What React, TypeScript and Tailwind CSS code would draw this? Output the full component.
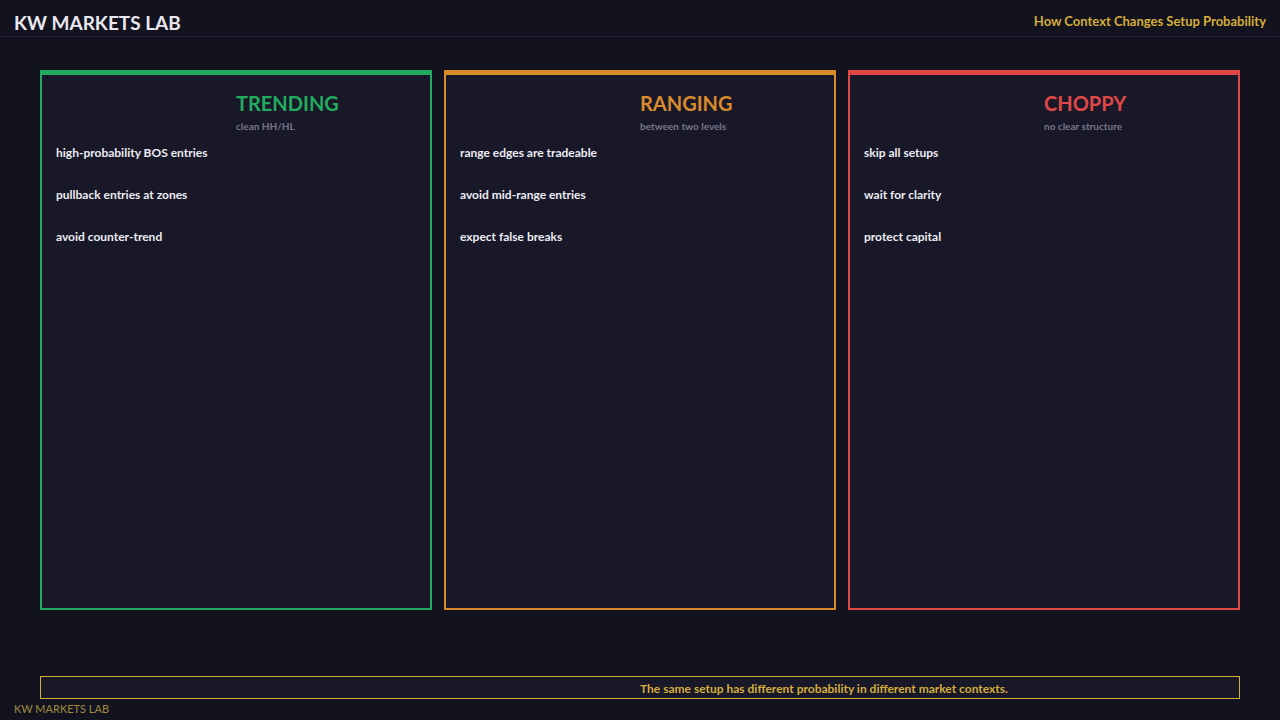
export default function App() {
  const cards = [
    { t: "TRENDING", s: "clean HH/HL", c: "text-[#22ab5f]", b: "border-[#22ab5f]", items: ["high-probability BOS entries", "pullback entries at zones", "avoid counter-trend"] },
    { t: "RANGING", s: "between two levels", c: "text-[#d98a2b]", b: "border-[#d98a2b]", items: ["range edges are tradeable", "avoid mid-range entries", "expect false breaks"] },
    { t: "CHOPPY", s: "no clear structure", c: "text-[#e04848]", b: "border-[#e04848]", items: ["skip all setups", "wait for clarity", "protect capital"] },
  ];
  return (
    <div className="w-[1280px] h-[720px] bg-[#13131f] flex flex-col overflow-hidden" style={{ fontFamily: "Lato, 'Open Sans', sans-serif" }}>
      <div className="h-[37px] border-b border-[#23233a] flex items-center justify-between px-[14px]">
        <span className="text-[19px] font-bold text-[#e8e8ee] mt-[9px] leading-none">KW MARKETS LAB</span>
        <span className="text-[13px] font-bold text-[#d4ad3a] mt-[7px]">How Context Changes Setup Probability</span>
      </div>
      <div className="flex gap-[12px] px-[40px] mt-[33px] h-[540px]">
        {cards.map((k) => (
          <div key={k.t} className={`flex-1 bg-[#181828] border-2 border-t-[5px] ${k.b} flex flex-col`}>
            <div className="pl-[194px] pt-[14px]">
              <div className={`text-[20px] font-bold leading-[28px] ${k.c}`}>{k.t}</div>
              <div className="text-[10px] font-bold text-[#77778a] leading-[14px] mt-[2px]">{k.s}</div>
            </div>
            <div className="pl-[14px] pt-[12px] flex flex-col gap-[26px]">
              {k.items.map((i) => (
                <div key={i} className="text-[12px] font-bold text-[#ececf2] leading-[16px]">{i}</div>
              ))}
            </div>
          </div>
        ))}
      </div>
      <div className="mx-[40px] mt-[66px] h-[23px] border border-[#d4ad3a] bg-[#181828] pl-[599px] flex items-end">
        <span className="text-[12px] font-bold text-[#d4ad3a] leading-[18px]">The same setup has different probability in different market contexts.</span>
      </div>
      <div className="pl-[14px] text-[11px] text-[#a08a40] leading-[20px]">KW MARKETS LAB</div>
    </div>
  );
}
